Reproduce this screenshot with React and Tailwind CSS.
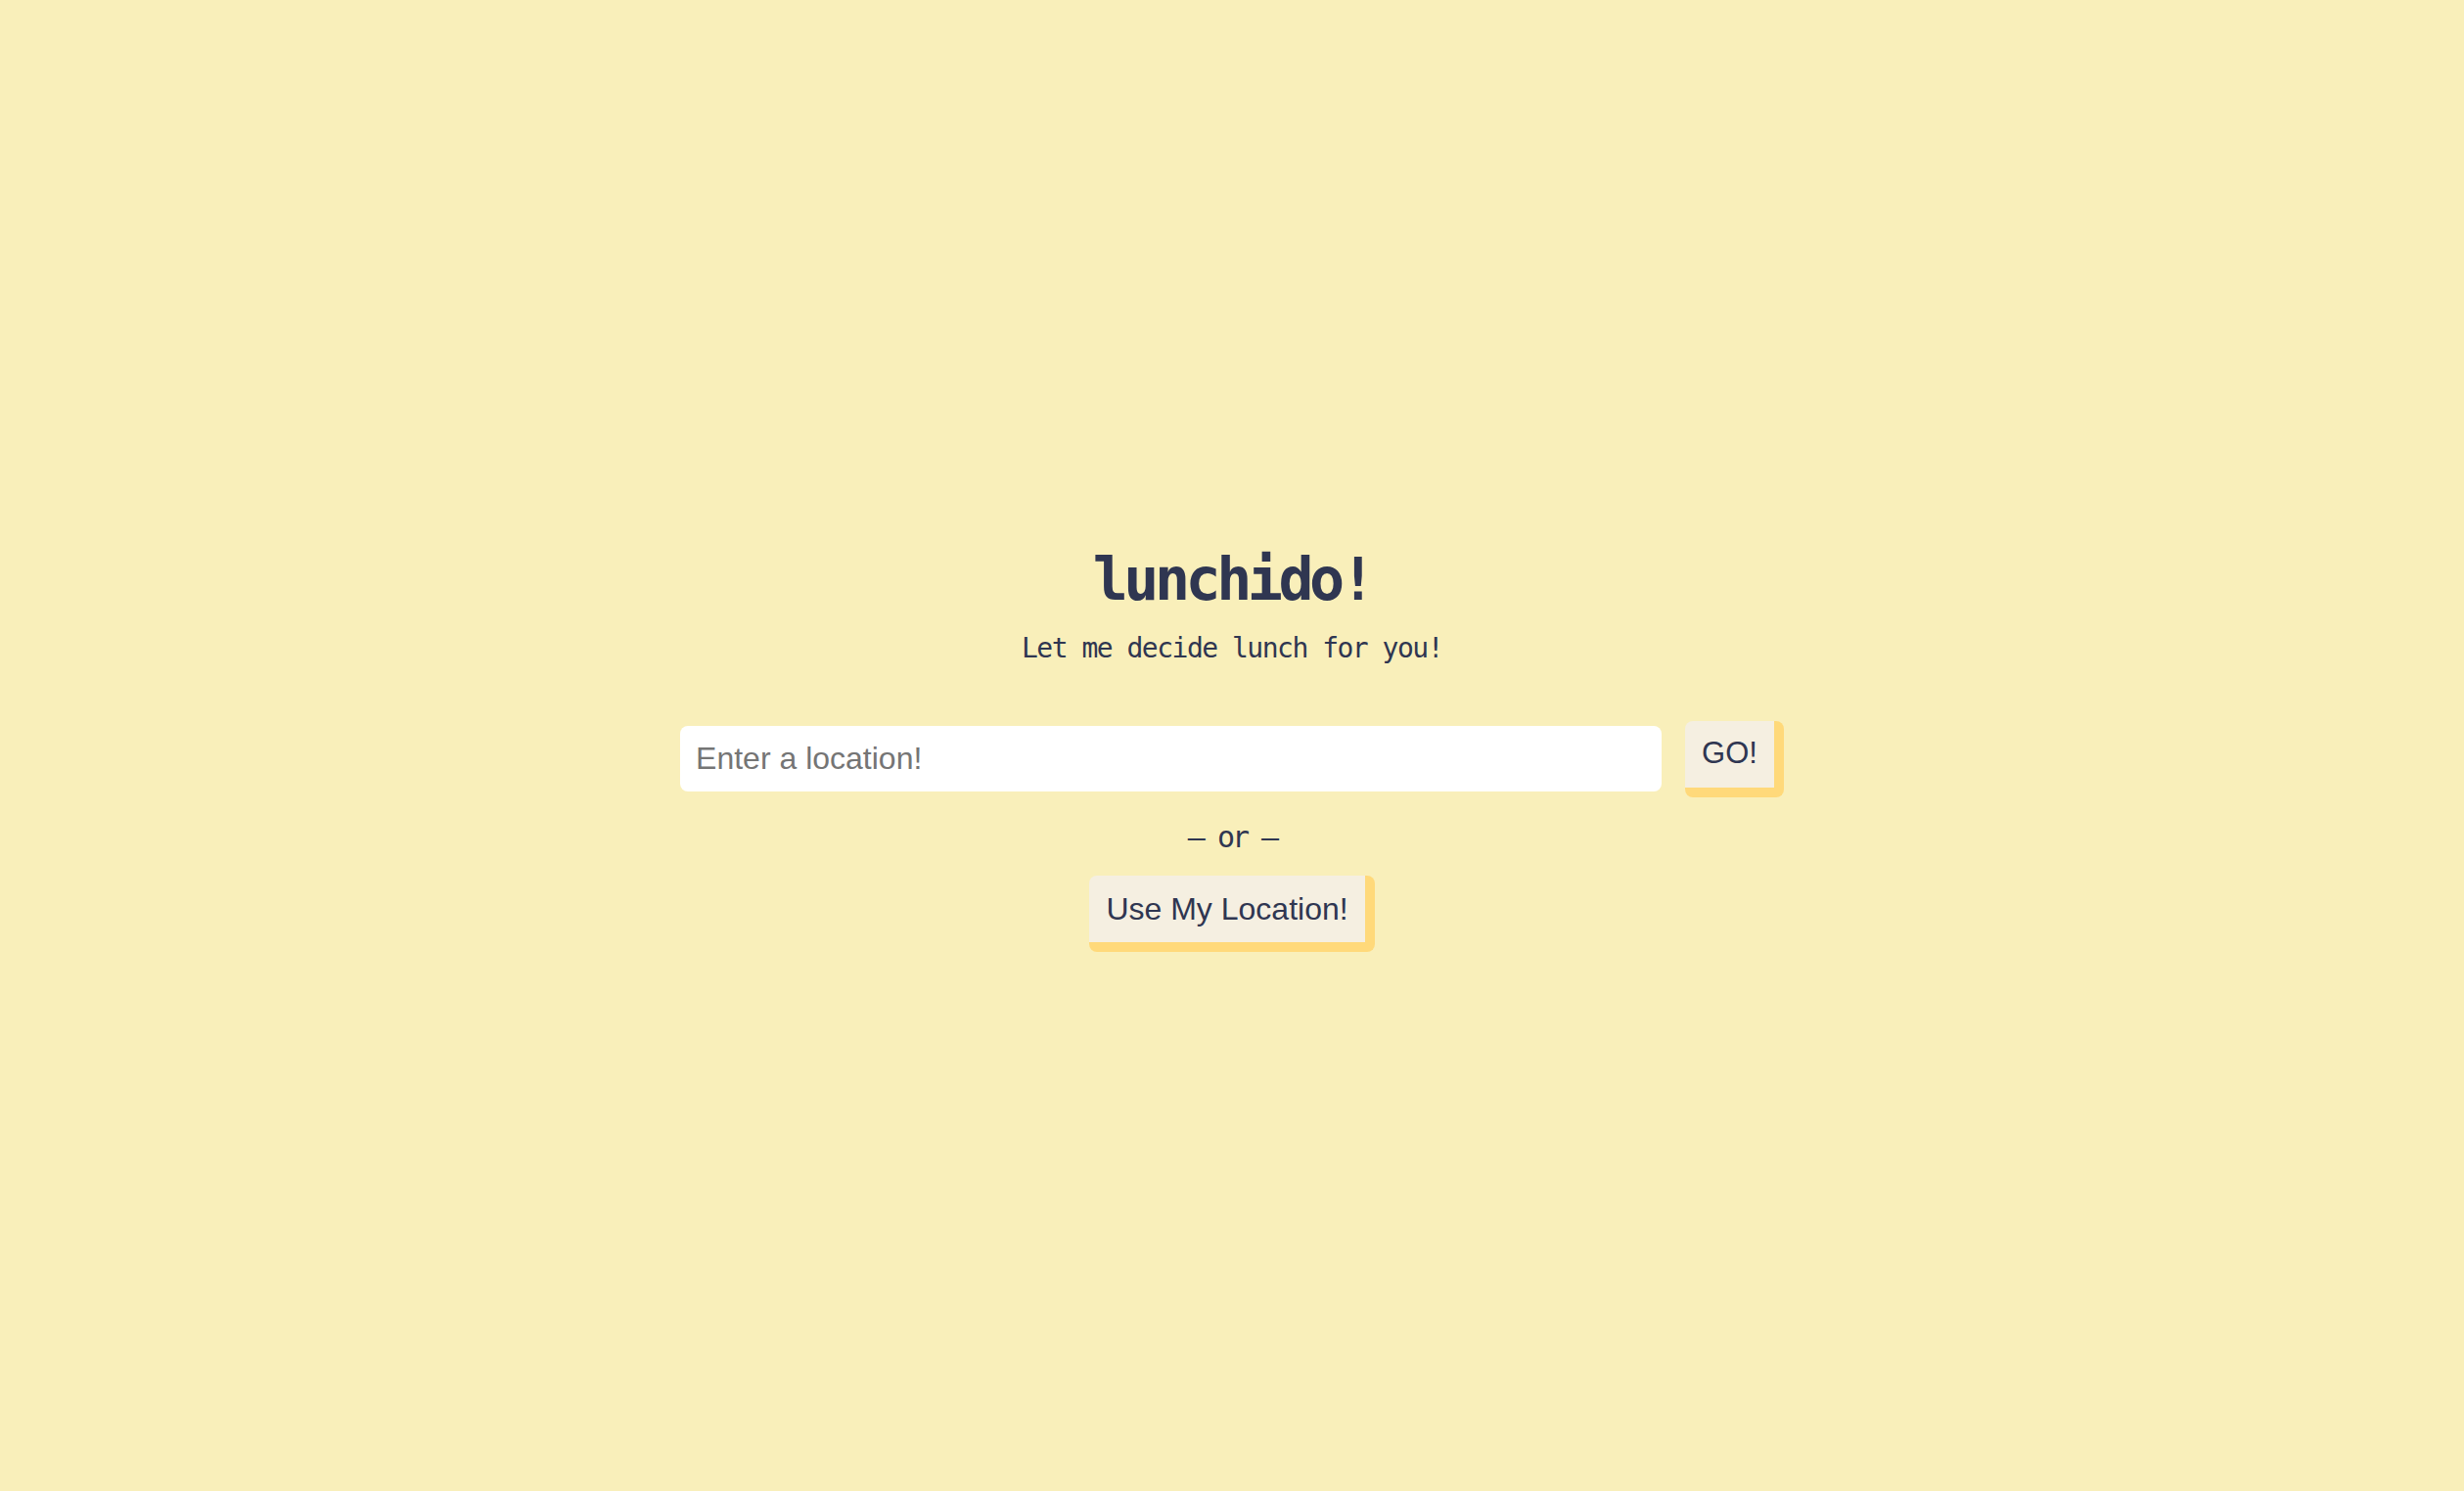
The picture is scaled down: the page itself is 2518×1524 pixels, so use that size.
export default function App() {
    return (
        <div className="min-h-screen w-full bg-[#f9efba] flex flex-col items-center justify-center pt-[10px] text-[#2f3651]">
            <h1 className="font-['DejaVu_Sans_Mono',monospace] text-[60px] leading-none tracking-[-4.5px] font-bold">lunchido!</h1>
            <p className="mt-[27px] font-['DejaVu_Sans_Mono',monospace] text-[28px] leading-none tracking-[-1.5px]">Let me decide lunch for you!</p>

            <div className="mt-[60px] flex items-center gap-6">
                <input
                    type="text"
                    placeholder="Enter a location!"
                    className="w-[1003px] h-[67px] rounded-lg bg-white px-4 font-['Liberation_Sans',Arial,sans-serif] text-[32px] text-[#2f3651] placeholder:text-[#757575] outline-none"
                />
                <button className="h-[78px] px-[17px] rounded-lg bg-[#f5efe1] border-r-[10px] border-b-[10px] border-[#ffd97a] font-['Liberation_Sans',Arial,sans-serif] text-[31px] text-[#2f3651]">
                    GO!
                </button>
            </div>

            <p className="mt-[26px] font-['DejaVu_Sans_Mono',monospace] text-[30px] leading-none tracking-[-3px]">— or —</p>

            <button className="mt-[24px] h-[78px] px-[17px] rounded-lg bg-[#f5efe1] border-r-[10px] border-b-[10px] border-[#ffd97a] font-['Liberation_Sans',Arial,sans-serif] text-[32px] text-[#2f3651]">
                Use My Location!
            </button>
        </div>
    );
}
